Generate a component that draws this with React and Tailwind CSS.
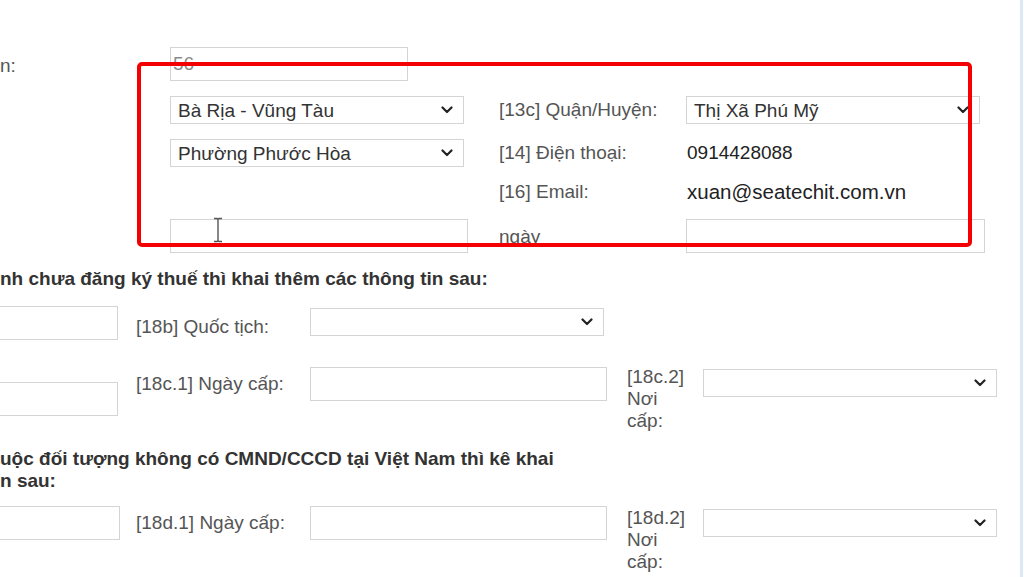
import React from "react";

const Chevron = () => (
  <svg width="12" height="8" viewBox="0 0 12 8" className="shrink-0">
    <polyline points="1.5,1.5 6,6 10.5,1.5" fill="none" stroke="#222" strokeWidth="2.2" strokeLinecap="round" strokeLinejoin="round" />
  </svg>
);

const Select = ({ value, className = "" }) => (
  <div className={`flex h-[28px] items-center justify-between border border-[#d4d4d4] bg-white pl-[7px] pr-[10px] text-[19px] text-[#333] ${className}`}>
    <span className="leading-none">{value}</span>
    <Chevron />
  </div>
);

const Input = ({ value, className = "" }) => (
  <div className={`flex h-[34px] items-center border border-[#d4d4d4] bg-white pl-[2px] text-[19px] text-[#8a8a8a] ${className}`}>
    {value}
  </div>
);

const Label = ({ children, className = "" }) => (
  <div className={`text-[19px] leading-[22px] text-[#555] ${className}`}>{children}</div>
);

export default function App() {
  return (
    <div
      className="relative flex h-[577px] w-[1024px] overflow-hidden bg-white"
      style={{ fontFamily: '"Liberation Sans", Arial, sans-serif' }}
    >
      <div className="flex-1 pt-[47px]">
        {/* row: số nhà */}
        <div className="flex h-[34px]">
          <Label className="flex w-[170px] items-center pt-[3px]">n:</Label>
          <Input value="56" className="w-[238px]" />
        </div>

        {/* row: tỉnh / quận */}
        <div className="mt-[15px] flex h-[28px] items-center">
          <div className="w-[170px]" />
          <Select value="Bà Rịa - Vũng Tàu" className="w-[294px]" />
          <Label className="ml-[35px] w-[187px]">[13c] Quận/Huyện:</Label>
          <Select value="Thị Xã Phú Mỹ" className="w-[294px]" />
        </div>

        {/* row: phường / điện thoại */}
        <div className="mt-[15px] flex h-[28px] items-center">
          <div className="w-[170px]" />
          <Select value="Phường Phước Hòa" className="w-[294px]" />
          <Label className="ml-[35px] w-[188px]">[14] Điện thoại:</Label>
          <div className="text-[19px] text-[#222]">0914428088</div>
        </div>

        {/* row: email */}
        <div className="mt-[8px] flex h-[34px] items-center">
          <div className="w-[499px]" />
          <Label className="w-[188px]">[16] Email:</Label>
          <div className="text-[20.5px] text-[#222]">xuan@seatechit.com.vn</div>
        </div>

        {/* row: ngày */}
        <div className="mt-[10px] flex h-[34px] items-center">
          <div className="w-[170px]" />
          <Input value="" className="w-[298px]" />
          <Label className="ml-[31px] w-[187px] pt-[1px]">ngày</Label>
          <Input value="" className="h-[33px] w-[299px]" />
        </div>

        <div className="mt-[14px] text-[19px] font-bold leading-[24px] text-[#333]">
          nh chưa đăng ký thuế thì khai thêm các thông tin sau:
        </div>

        {/* 18b */}
        <div className="mt-[15px] flex items-start">
          <Input value="" className="ml-[-10px] h-[33px] w-[128px]" />
          <Label className="ml-[18px] mt-[10px] w-[174px]">[18b] Quốc tịch:</Label>
          <Select value="" className="mt-[2px] w-[294px]" />
        </div>

        {/* 18c */}
        <div className="mt-[26px] flex items-start">
          <Input value="" className="ml-[-10px] mt-[16px] h-[33px] w-[128px]" />
          <Label className="ml-[18px] mt-[7px] w-[174px]">[18c.1] Ngày cấp:</Label>
          <Input value="" className="mt-[1px] h-[33px] w-[297px]" />
          <Label className="ml-[20px] w-[76px]">
            [18c.2]
            <br />
            Nơi
            <br />
            cấp:
          </Label>
          <Select value="" className="mt-[3px] w-[294px]" />
        </div>

        <div className="mt-[16px] text-[19px] font-bold leading-[22px] text-[#333]">
          uộc đối tượng không có CMND/CCCD tại Việt Nam thì kê khai
          <br />
          n sau:
        </div>

        {/* 18d */}
        <div className="mt-[14px] flex items-start">
          <Input value="" className="ml-[-10px] h-[33px] w-[130px]" />
          <Label className="ml-[16px] mt-[6px] w-[174px]">[18d.1] Ngày cấp:</Label>
          <Input value="" className="h-[33px] w-[297px]" />
          <Label className="ml-[20px] mt-[1px] w-[76px]">
            [18d.2]
            <br />
            Nơi
            <br />
            cấp:
          </Label>
          <Select value="" className="mt-[3px] w-[294px]" />
        </div>
      </div>

      {/* window edge */}
      <div className="w-[3px] bg-[#dbe8f6]" />
      <div className="w-[1px] bg-white" />

      {/* text cursor */}
      <svg className="pointer-events-none absolute left-[213px] top-[217px]" width="10" height="26" viewBox="0 0 10 26">
        <path d="M1 1.5 H4 Q5 1.5 5 3 V23 Q5 24.5 4 24.5 H1 M9 1.5 H6 Q5 1.5 5 3 M5 23 Q5 24.5 6 24.5 H9" fill="none" stroke="#555" strokeWidth="1.4" />
      </svg>

      {/* red highlight */}
      <div className="pointer-events-none absolute left-[137px] top-[62px] h-[185px] w-[835px] rounded-[5px] border-[4px] border-[#f50000]" />
    </div>
  );
}
